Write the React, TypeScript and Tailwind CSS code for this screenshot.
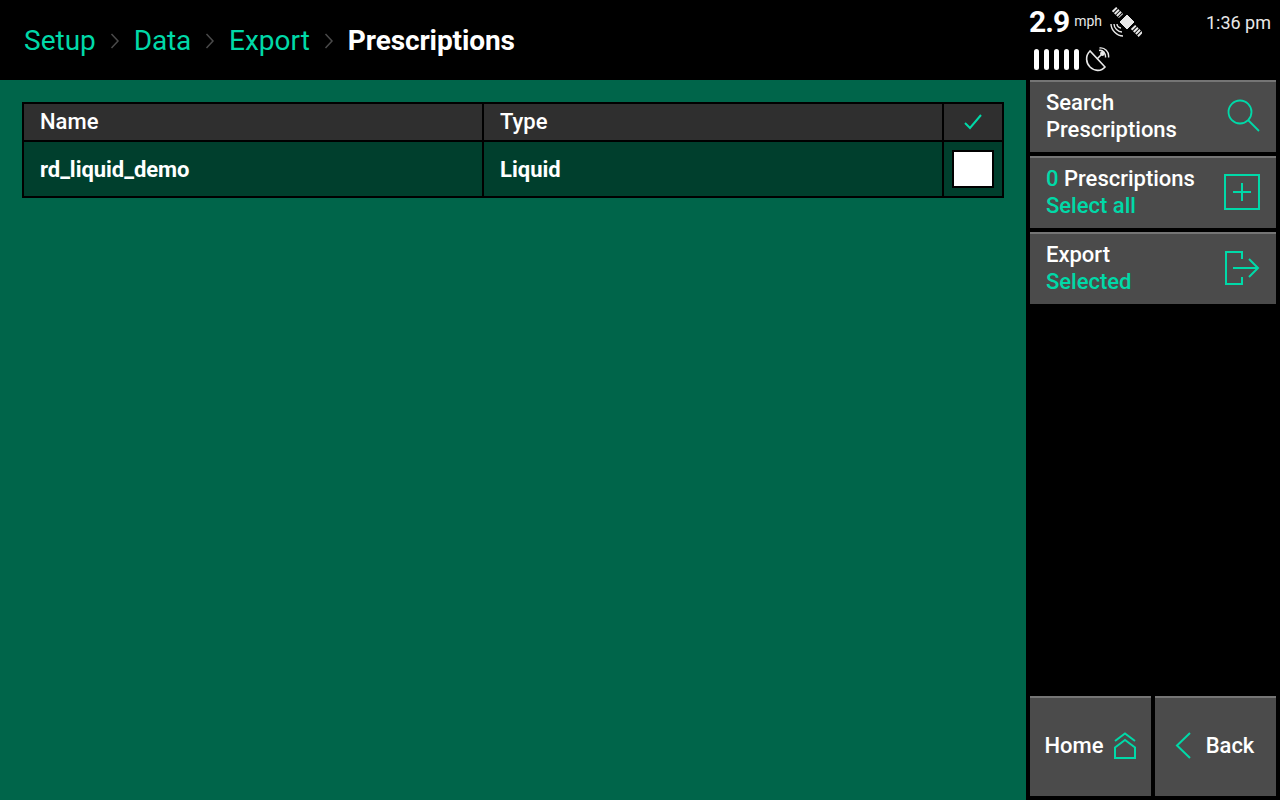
import React from 'react';

const Sep = () => (
  <svg width="10" height="18" viewBox="0 0 10 18" fill="none" stroke="#4a4a4a" strokeWidth="1.5" className="mx-[14px]">
    <path d="M1.5 2l6.5 7-6.5 7" />
  </svg>
);

function SideButton({ children, icon }: { children: React.ReactNode; icon: React.ReactNode }) {
  return (
    <div className="h-[72px] flex items-center justify-between bg-[#4b4b4b] border-t-2 border-[#757575] pl-4 pr-4 text-[22px] leading-[27px] font-medium text-white">
      <div className="-mt-[2px]">{children}</div>
      <div className="-mt-[2px]">{icon}</div>
    </div>
  );
}

export default function App() {
  return (
    <div className="w-[1280px] h-[800px] bg-black flex flex-col overflow-hidden font-['Roboto',sans-serif]">
      <div className="h-[80px] flex shrink-0">
        <div className="flex-1 flex items-center pl-6 pt-[2px] text-[28px] text-[#00d9a8]">
          <span>Setup</span>
          <Sep />
          <span className="tracking-[-0.2px]">Data</span>
          <Sep />
          <span>Export</span>
          <Sep />
          <span className="font-bold text-white tracking-[-0.1px]">Prescriptions</span>
        </div>
        <div className="w-[254px] pl-1 pt-[5px] text-white">
          <div className="flex items-start h-[42px]">
            <span className="text-[30px] leading-[34px] font-bold tracking-[-1px] -ml-px">2.9</span>
            <span className="text-[14px] leading-[32px] ml-[5px] text-[#e8e8e8]">mph</span>
            <svg width="32" height="32" viewBox="0 0 32 32" fill="none" stroke="#e8e8e8" className="ml-[8px] mt-[1px]">
              <path d="M4 3l7 7" strokeWidth="6" strokeDasharray="2 1" />
              <path d="M17 9l7 7-7 7-7-7z" fill="#e8e8e8" strokeWidth="1" />
              <path d="M23 21l8 8" strokeWidth="6" strokeDasharray="2 1" />
              <path d="M7 18c0 2 2 4 4 4M4 18c0 4 4 8 8 8M1 18c0 6 6 12 12 12" strokeWidth="1.4" />
            </svg>
            <span className="ml-auto mr-[9px] text-[18px] leading-[36px] text-[#e8e8e8]">1:36 pm</span>
          </div>
          <div className="flex items-center gap-[5px] pl-1">
            {[0, 1, 2, 3, 4].map((i) => (
              <div key={i} className="w-[5px] h-[21px] rounded-full bg-white" />
            ))}
            <svg width="25" height="25" viewBox="0 0 25 25" fill="none" stroke="#e8e8e8" strokeWidth="1.6" className="ml-[1px]">
              <path d="M5 4C0 9 1 16 5 20s11 5 15 0z" />
              <path d="M12 12l5-5" />
              <circle cx="17.5" cy="6.5" r="1.6" fill="#e8e8e8" />
              <path d="M14 3.500c4-1 7 3 6.500 7M14.500 1c5-1 10 4 9 9.500" strokeWidth="1.4" />
            </svg>
          </div>
        </div>
      </div>

      <div className="flex-1 flex min-h-0">
        <div className="w-[1026px] bg-[#00654a] pt-[22px] pl-[22px]">
          <div className="w-[982px] border-2 border-black text-[22px] font-medium text-white">
            <div className="h-[38px] flex bg-[#2f2f2f] border-b-2 border-black">
              <div className="w-[460px] pl-4 pb-[2px] flex items-center border-r-2 border-black">Name</div>
              <div className="w-[460px] pl-4 pb-[2px] flex items-center border-r-2 border-black">Type</div>
              <div className="flex-1 flex items-center justify-center">
                <svg width="18" height="16" viewBox="0 0 18 16" fill="none" stroke="#00d9a8" strokeWidth="2">
                  <path d="M1 9l5 5L17 1" />
                </svg>
              </div>
            </div>
            <div className="h-[54px] flex bg-[#003f2d]">
              <div className="w-[460px] pl-4 flex items-center border-r-2 border-black font-bold tracking-[-0.05px]">rd_liquid_demo</div>
              <div className="w-[460px] pl-4 flex items-center border-r-2 border-black font-bold">Liquid</div>
              <div className="flex-1 flex items-center justify-center">
                <div className="w-[42px] h-[38px] bg-white border-2 border-black" />
              </div>
            </div>
          </div>
        </div>

        <div className="flex-1 flex flex-col pl-1 pr-1 pb-1">
          <div className="flex flex-col gap-1">
            <SideButton
              icon={
                <svg width="34" height="34" viewBox="0 0 34 34" fill="none" stroke="#00d9a8" strokeWidth="1.8">
                  <circle cx="14" cy="13" r="11.500" />
                  <path d="M22 21l11 11" />
                </svg>
              }
            >
              Search
              <br />
              Prescriptions
            </SideButton>
            <SideButton
              icon={
                <svg width="36" height="36" viewBox="0 0 36 36" fill="none" stroke="#00d9a8" strokeWidth="2">
                  <rect x="1" y="1" width="34" height="34" />
                  <path d="M18 9v18M9 18h18" />
                </svg>
              }
            >
              <span className="text-[#00d9a8]">0</span> Prescriptions
              <br />
              <span className="text-[#00d9a8]">Select all</span>
            </SideButton>
            <SideButton
              icon={
                <svg width="36" height="36" viewBox="0 0 36 36" fill="none" stroke="#00d9a8" strokeWidth="2">
                  <path d="M18 9V2H2v32h16v-7" />
                  <path d="M9 18h25M25 9l9 9-9 9" />
                </svg>
              }
            >
              Export
              <br />
              <span className="text-[#00d9a8]">Selected</span>
            </SideButton>
          </div>

          <div className="mt-auto flex gap-1 text-[22px] font-medium text-white">
            <div className="flex-1 h-[100px] bg-[#4b4b4b] border-t-2 border-[#757575] pb-[4px] flex items-center justify-center gap-[9px]">
              <span>Home</span>
              <svg width="24" height="27" viewBox="0 0 24 27" fill="none" stroke="#00d9a8" strokeWidth="2">
                <path d="M2 9L12 1.500l10 7.500" />
                <path d="M2 15.500L12 8l10 7.500V26H2z" />
              </svg>
            </div>
            <div className="flex-1 h-[100px] bg-[#4b4b4b] border-t-2 border-[#757575] pb-[4px] flex items-center justify-center gap-[15px]">
              <svg width="16" height="27" viewBox="0 0 16 27" fill="none" stroke="#00d9a8" strokeWidth="2" className="-ml-[2px]">
                <path d="M15 1L2 13.500 15 26" />
              </svg>
              <span>Back</span>
            </div>
          </div>
        </div>
      </div>
    </div>
  );
}
